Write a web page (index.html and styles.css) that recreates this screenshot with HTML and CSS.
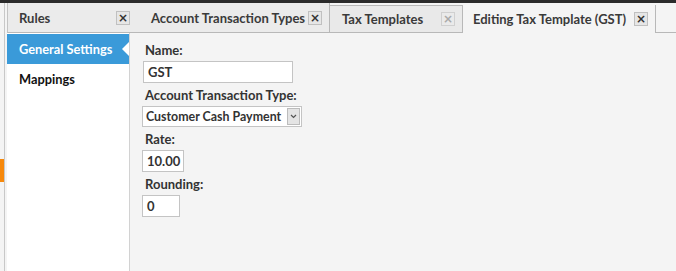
FILE: index.html
```html
<!DOCTYPE html>
<html>
<head>
<meta charset="utf-8">
<link rel="stylesheet" href="styles.css">
</head>
<body>
<div class="topbar"></div>
<div class="main">
  <div class="strip"><div class="marker"></div></div>
  <div class="app">
    <div class="tabbar">
      <div class="tab tab-rules"><span class="tab-label">Rules</span><span class="close">×</span></div>
      <div class="tab tab-att"><span class="tab-label">Account Transaction Types</span><span class="close">×</span></div>
      <div class="tab tab-tax"><span class="tab-label">Tax Templates</span><span class="close faded">×</span></div>
      <div class="tab tab-active"><span class="tab-label">Editing Tax Template (GST)</span><span class="close">×</span></div>
      <div class="tab-rest"></div>
    </div>
    <div class="content">
      <div class="sidebar">
        <div class="nav-item selected">General Settings<span class="notch"></span></div>
        <div class="nav-item">Mappings</div>
      </div>
      <div class="form">
        <label class="lbl lbl-name">Name:</label>
        <div class="field f-name">GST</div>
        <label class="lbl">Account Transaction Type:</label>
        <div class="field f-select"><span class="sel-text">Customer Cash Payment</span><span class="dd"><svg width="7" height="5" viewBox="0 0 7 5"><path d="M1 1 L3.5 3.5 L6 1" fill="none" stroke="#555" stroke-width="1.2"/></svg></span></div>
        <label class="lbl">Rate:</label>
        <div class="field f-rate">10.00</div>
        <label class="lbl">Rounding:</label>
        <div class="field f-round">0</div>
      </div>
    </div>
  </div>
</div>
</body>
</html>
```

FILE: styles.css
```css
html, body {
  margin: 0;
  padding: 0;
  height: 100%;
}
body {
  background: #f4f4f4;
  font-family: Lato, "Open Sans", sans-serif;
  font-weight: 700;
  font-size: 13px;
  color: #333;
  overflow: hidden;
}
.topbar {
  height: 3px;
  background: #2b2b2b;
}
.main {
  display: flex;
  height: 268px;
}
.strip {
  width: 4px;
  border-right: 1px solid #c8c8c8;
  background: #f4f4f4;
}
.marker {
  margin-top: 156px;
  height: 23px;
  width: 4px;
  background: #f7890c;
}
.app {
  flex: 1;
  display: flex;
  flex-direction: column;
  padding-left: 2px;
}
.tabbar {
  display: flex;
  height: 30px;
}
.tab {
  display: flex;
  align-items: center;
  box-sizing: border-box;
  height: 30px;
  color: #3a3a3a;
  white-space: nowrap;
}
.tab-label {
  flex: 1;
}
.tab-rules {
  width: 130px;
  background: #ebebeb;
  border-left: 1px solid #c4c4c4;
  border-bottom: 1px solid #b8b8b8;
  padding-left: 11px;
}
.tab-att {
  width: 193px;
  background: #ebebeb;
  border-right: 1px solid #b8b8b8;
  border-bottom: 1px solid #b8b8b8;
  padding-left: 14px;
}
.tab-tax {
  width: 133px;
  margin-top: 2px;
  height: 28px;
  background: #e9e9e9;
  border: 1px solid #b8b8b8;
  border-left: none;
  padding-left: 12px;
}
.tab-active {
  width: 193px;
  background: #f4f4f4;
  border-right: 1px solid #b8b8b8;
  margin-top: 2px;
  height: 28px;
  padding-left: 10px;
}
.tab-rest {
  flex: 1;
  border-bottom: 1px solid #b8b8b8;
}
.close {
  width: 12px;
  height: 12px;
  border: 1px solid #c0c0c0;
  background: #e6e6e6;
  font-size: 12px;
  line-height: 12px;
  text-align: center;
  font-family: "DejaVu Sans", sans-serif;
  color: #333;
  margin-right: 7px;
}
.close.faded {
  color: #aaa;
  border-color: #d0d0d0;
  background: #eaeaea;
}
.content {
  flex: 1;
  display: flex;
}
.sidebar {
  width: 122px;
  background: #fff;
  border-right: 1px solid #d2d2d2;
  padding-top: 1px;
}
.nav-item {
  height: 30px;
  line-height: 30px;
  padding-left: 12px;
  font-size: 12.8px;
  color: #111;
  position: relative;
  white-space: nowrap;
}
.nav-item.selected {
  background: #3a9ad9;
  color: #fff;
}
.notch {
  position: absolute;
  right: 0;
  top: 8px;
  width: 0;
  height: 0;
  border-top: 7px solid transparent;
  border-bottom: 7px solid transparent;
  border-right: 7px solid #fff;
}
.form {
  display: flex;
  flex-direction: column;
  align-items: flex-start;
  padding-left: 12px;
  padding-top: 7px;
}
.lbl {
  margin-left: 3px;
  height: 21px;
  line-height: 21px;
  white-space: nowrap;
}
.field {
  box-sizing: border-box;
  background: #fff;
  border: 1px solid #c4c4c4;
  height: 22px;
  line-height: 20px;
  padding-left: 4px;
  margin-bottom: 2px;
  white-space: nowrap;
}
.f-name { width: 150px; margin-left: 1px; }
.f-select {
  width: 160px;
  height: 21px;
  line-height: 19px;
  display: flex;
  padding-left: 3px;
  padding-right: 1px;
}
.sel-text {
  flex: none;
  font-size: 12.4px;
}
.dd {
  margin-left: auto;
  flex: none;
  width: 13px;
  height: 17px;
  margin-top: 1px;
  background: #e4e4e4;
  border: 1px solid #bcbcbc;
  box-sizing: border-box;
  display: flex;
  align-items: center;
  justify-content: center;
}
.f-rate { width: 42px; }
.f-round { width: 38px; }
```
